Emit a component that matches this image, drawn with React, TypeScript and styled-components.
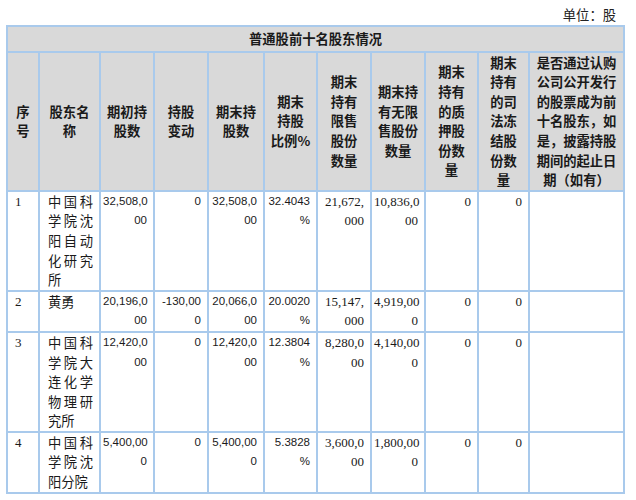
import styled, { createGlobalStyle } from "styled-components";

type Align = "left" | "right" | "center" | "justify";
type Face = "serif" | "sans" | "cjk";

type Row = {
  no: string;
  name: string;
  values: string[];
};

const CJK = `"Noto Sans CJK SC", "Noto Sans", sans-serif`;
const SERIF = `"Liberation Serif", "Noto Sans CJK SC", serif`;
const SANS = `"Liberation Sans", "Noto Sans CJK SC", sans-serif`;

const widths = [32, 61, 54, 54, 56, 53, 54, 54, 53, 51, 95];

const headers = [
  "序\n号",
  "股东名\n称",
  "期初持\n股数",
  "持股\n变动",
  "期末持\n股数",
  "期末\n持股\n比例%",
  "期末\n持有\n限售\n股份\n数量",
  "期末持\n有无限\n售股份\n数量",
  "期末\n持有\n的质\n押股\n份数\n量",
  "期末\n持有\n的司\n法冻\n结股\n份数\n量",
  "是否通过认购\n公司公开发行\n的股票成为前\n十名股东，如\n是，披露持股\n期间的起止日\n期（如有）",
];

const rows: Row[] = [
  {
    no: "1",
    name: "中国科学院沈阳自动化研究所",
    values: ["32,508,0\n00", "0", "32,508,0\n00", "32.4043\n%", "21,672,\n000", "10,836,0\n00", "0", "0"],
  },
  {
    no: "2",
    name: "黄勇",
    values: ["20,196,0\n00", "-130,00\n0", "20,066,0\n00", "20.0020\n%", "15,147,\n000", "4,919,00\n0", "0", "0"],
  },
  {
    no: "3",
    name: "中国科学院大连化学物理研究所",
    values: ["12,420,0\n00", "0", "12,420,0\n00", "12.3804\n%", "8,280,0\n00", "4,140,00\n0", "0", "0"],
  },
  {
    no: "4",
    name: "中国科学院沈阳分院",
    values: ["5,400,00\n0", "0", "5,400,00\n0", "5.3828\n%", "3,600,0\n00", "1,800,00\n0", "0", "0"],
  },
];

export default function App() {
  return (
    <>
      <GlobalStyle />
      <Page>
        <Unit>单位：股</Unit>
        <Table>
          <colgroup>
            {widths.map((w, i) => (
              <col key={i} style={{ width: w }} />
            ))}
          </colgroup>
          <thead>
            <tr>
              <Title colSpan={11}>普通股前十名股东情况</Title>
            </tr>
            <tr>
              {headers.map((h, i) => (
                <HeadCell key={i}>{h}</HeadCell>
              ))}
            </tr>
          </thead>
          <tbody>
            {rows.map((r) => (
              <tr key={r.no}>
                <Cell $align="left" $face="serif">
                  {r.no}
                </Cell>
                <Cell $align="justify" $face="cjk">
                  {r.name}
                </Cell>
                {r.values.map((v, i) => (
                  <Cell key={i} $align="right" $face={i < 4 ? "sans" : "serif"}>
                    {v}
                  </Cell>
                ))}
                <Cell $align="left" $face="cjk" />
              </tr>
            ))}
          </tbody>
        </Table>
      </Page>
    </>
  );
}

const GlobalStyle = createGlobalStyle`
  body {
    margin: 0;
    background: #ffffff;
    color: #1a1a1a;
    font-family: ${CJK};
  }
`;

const Page = styled.div`
  width: 617px;
  padding: 0 13px 0 6px;
`;

const Unit = styled.div`
  height: 25px;
  box-sizing: border-box;
  padding: 5px 7px 0 0;
  text-align: right;
  font-size: 13.3px;
  line-height: 20px;
  color: #222;
`;

const Table = styled.table`
  width: 617px;
  table-layout: fixed;
  border-collapse: separate;
  border-spacing: 0;
  border: 1px solid #a9caec;
`;

const Title = styled.th`
  background: #d9d9d9;
  border: 1px solid #a9caec;
  padding: 2px 0;
  font-family: ${CJK};
  font-weight: 700;
  font-size: 13.3px;
  line-height: 19.6px;
  text-align: center;
`;

const HeadCell = styled.th`
  background: #d9d9d9;
  border: 1px solid #a9caec;
  padding: 0;
  font-family: ${CJK};
  font-weight: 700;
  font-size: 13.3px;
  line-height: 19.6px;
  text-align: center;
  vertical-align: middle;
  white-space: pre-line;
`;

const fonts: Record<Face, string> = { serif: SERIF, sans: SANS, cjk: CJK };
const sizes: Record<Face, string> = { serif: "13px", sans: "11.5px", cjk: "13.3px" };

const Cell = styled.td<{ $align: Align; $face: Face }>`
  border: 1px solid #a9caec;
  padding: 0 6px 0 ${(p) => (p.$align === "justify" ? "8px" : p.$align === "right" ? "2px" : "7px")};
  font-family: ${(p) => fonts[p.$face]};
  font-size: ${(p) => sizes[p.$face]};
  line-height: 19.6px;
  text-align: ${(p) => p.$align};
  vertical-align: top;
  white-space: ${(p) => (p.$align === "right" ? "pre" : "pre-line")};
  color: #1a1a1a;
`;
